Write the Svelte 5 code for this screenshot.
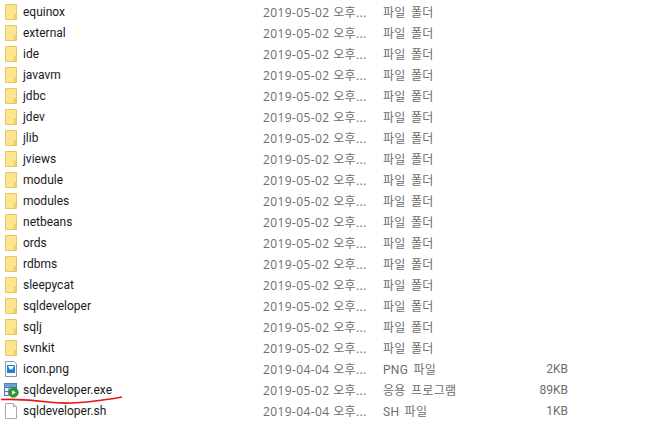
<script>
    const folder = "파일 폴더"
    const day = "2019-05-02 오후..."
    const folders = ["equinox", "external", "ide", "javavm", "jdbc", "jdev", "jlib", "jviews", "module", "modules", "netbeans", "ords", "rdbms", "sleepycat", "sqldeveloper", "sqlj", "svnkit"]
    const files = [
        {name: "icon.png", icon: "png", date: "2019-04-04 오후...", type: "PNG 파일", size: "2KB"},
        {name: "sqldeveloper.exe", icon: "exe", date: day, type: "응용 프로그램", size: "89KB"},
        {name: "sqldeveloper.sh", icon: "doc", date: "2019-04-04 오후...", type: "SH 파일", size: "1KB"}
    ]
    const rows = [
        ...folders.map((name) => ({name, icon: "folder", date: day, type: folder, size: ""})),
        ...files
    ]
</script>

<main class="list">
    {#each rows as row}
        <div class="row">
            <svg class="icon" width="16" height="16" viewBox="0 0 16 16">
                {#if row.icon === "folder"}
                    <path d="M2.5 .5H13.5V15.5H2.5Z" fill="#fde58f" stroke="#e9c75f"/>
                    <path d="M11.5 15V10.5H13.5V15Z" fill="#f6d573" stroke="#e9c75f"/>
                {:else if row.icon === "png"}
                    <path d="M2.5 .5H11L13.5 3V15.5H2.5Z" fill="#fff" stroke="#8a97a8"/>
                    <rect x="4" y="4" width="8" height="8" fill="#1c7fd0"/>
                    <path d="M5 5H11L9 9L8 7.5L7 9Z" fill="#fff"/>
                {:else if row.icon === "exe"}
                    <rect x="1.5" y="1.5" width="12" height="12" fill="#e4edf8" stroke="#4f7fba"/>
                    <path d="M1.5 5.5H13.5M1.5 9.5H13.5M6 1.5V13.5" stroke="#4f7fba" fill="none"/>
                    <rect x="2" y="2" width="11" height="3" fill="#6f9fd8"/>
                    <circle cx="10.5" cy="10.5" r="4.8" fill="#2c9a2e" stroke="#1f7a22" stroke-width=".6"/>
                    <path d="M9.2 8.3L12.8 10.5L9.2 12.7Z" fill="#fff"/>
                {:else}
                    <path d="M2.5 .5H10.5L13.5 3.5V15.5H2.5Z" fill="#fff" stroke="#a8a8a8"/>
                    <path d="M10.5 .5V3.5H13.5" fill="#f0f0f0" stroke="#a8a8a8"/>
                {/if}
            </svg>
            <span class="name">{row.name}</span>
            <span class="date">{row.date}</span>
            <span class="type">{row.type}</span>
            <span class="size">{row.size}</span>
        </div>
    {/each}
    <!-- Red hand drawn underline: -->
    <svg class="scribble" width="646" height="427" viewBox="0 0 646 427">
        <path d="M1 399.5C18 399 34 400 48 402S80 403 95 401S112 399 122 397" fill="none" stroke="#e8141c" stroke-width="1.7"/>
    </svg>
</main>

<style>
    :global(body) {
        background: #fff;
        overflow: hidden;
    }
    .list {
        position: relative;
        height: 427px;
        overflow: hidden;
        padding-top: 1px;
        box-sizing: border-box;
        background-color: #fff;
        font-family: Roboto, "Noto Sans CJK KR", sans-serif;
        font-size: 12px;
    }
    .row {
        display: grid;
        grid-template-columns: 23px 240px 120px 80px 105px;
        height: 21px;
        align-items: center;
        white-space: nowrap;
    }
    .icon {
        margin-left: 3px;
    }
    .name {
        color: #1a1a1a;
    }
    .date, .type, .size {
        color: #6d6d6d;
    }
    .date {
        font-family: "Open Sans", "Noto Sans CJK KR", sans-serif;
        letter-spacing: .4px;
    }
    .type {
        letter-spacing: .3px;
        word-spacing: 2px;
    }
    .size {
        text-align: right;
    }
    .scribble {
        position: absolute;
        left: 0;
        top: 0;
    }
</style>
